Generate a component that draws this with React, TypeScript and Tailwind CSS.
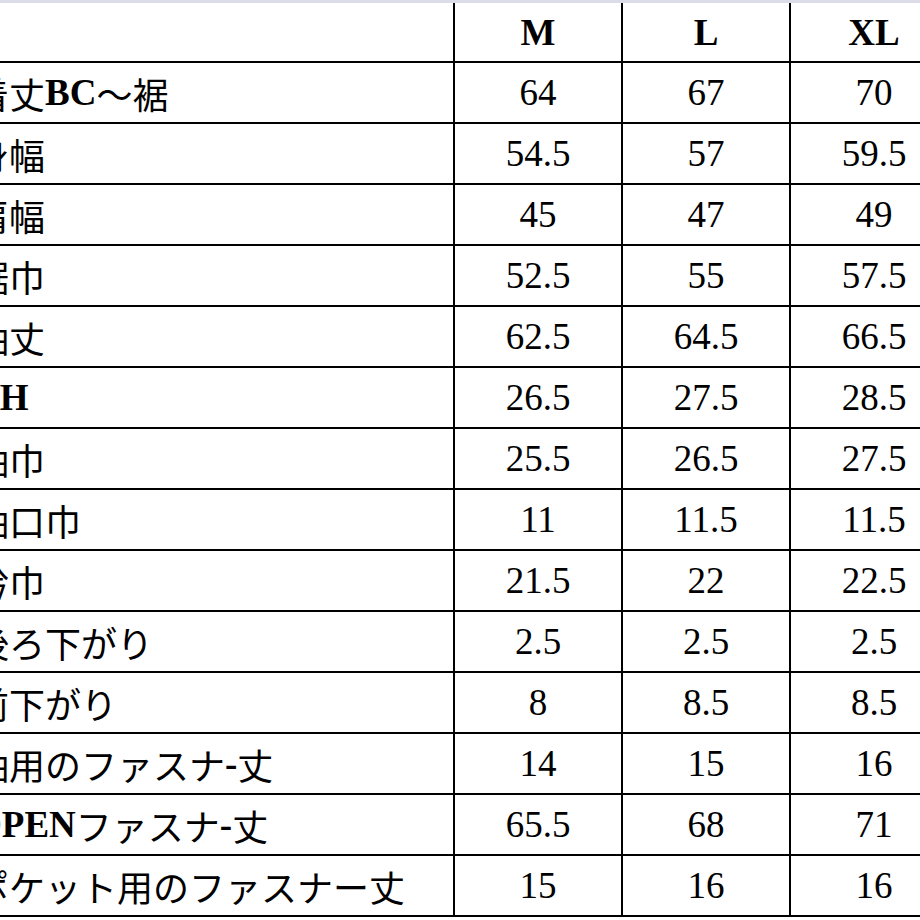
import React from 'react'

const SIZES = ['M', 'L', 'XL'] as const

type Row = { label: string; values: [string, string, string] }

const ROWS: Row[] = [
  { label: '着丈BC～裾', values: ['64', '67', '70'] },
  { label: '身幅', values: ['54.5', '57', '59.5'] },
  { label: '肩幅', values: ['45', '47', '49'] },
  { label: '裾巾', values: ['52.5', '55', '57.5'] },
  { label: '袖丈', values: ['62.5', '64.5', '66.5'] },
  { label: 'AH', values: ['26.5', '27.5', '28.5'] },
  { label: '袖巾', values: ['25.5', '26.5', '27.5'] },
  { label: '袖口巾', values: ['11', '11.5', '11.5'] },
  { label: '衿巾', values: ['21.5', '22', '22.5'] },
  { label: '後ろ下がり', values: ['2.5', '2.5', '2.5'] },
  { label: '前下がり', values: ['8', '8.5', '8.5'] },
  { label: '袖用のファスナ-丈', values: ['14', '15', '16'] },
  { label: 'OPENファスナ-丈', values: ['65.5', '68', '71'] },
  { label: 'ポケット用のファスナー丈', values: ['15', '16', '16'] },
]

// latin runs are bold Times, japanese runs stay regular
function Label({ text }: { text: string }) {
  const parts = text.split(/([A-Za-z\-]+)/).filter(Boolean)
  return (
    <>
      {parts.map((p, i) =>
        /^[A-Za-z\-]+$/.test(p) ? (
          <span key={i} className="font-bold font-['Liberation_Serif',serif]">
            {p}
          </span>
        ) : (
          <span key={i} className="font-normal text-[36px] font-['Noto_Sans_CJK_JP',sans-serif]">
            {p}
          </span>
        ),
      )}
    </>
  )
}

export default function App() {
  return (
    <div className="w-[920px] h-[920px] overflow-hidden bg-white text-black font-['Liberation_Serif','Noto_Sans_CJK_JP',serif] text-[37px]">
      <div className="h-[3px] bg-[#dcdce8]" />
      <div className="ml-[-32px] w-[1000px] grid grid-cols-[485px_166px_166px_166px] grid-rows-[58px_repeat(14,59px)] gap-[2px] bg-black border-b-2 border-black">
        <div className="bg-white" />
        {SIZES.map(s => (
          <div key={s} className="bg-white flex items-center justify-center font-bold leading-none">
            {s}
          </div>
        ))}
        {ROWS.map(row => (
          <React.Fragment key={row.label}>
            <div className="bg-white flex items-center pl-[5px] leading-none whitespace-nowrap">
              <Label text={row.label} />
            </div>
            {row.values.map((v, i) => (
              <div key={i} className="bg-white flex items-center justify-center leading-none">
                {v}
              </div>
            ))}
          </React.Fragment>
        ))}
      </div>
    </div>
  )
}
